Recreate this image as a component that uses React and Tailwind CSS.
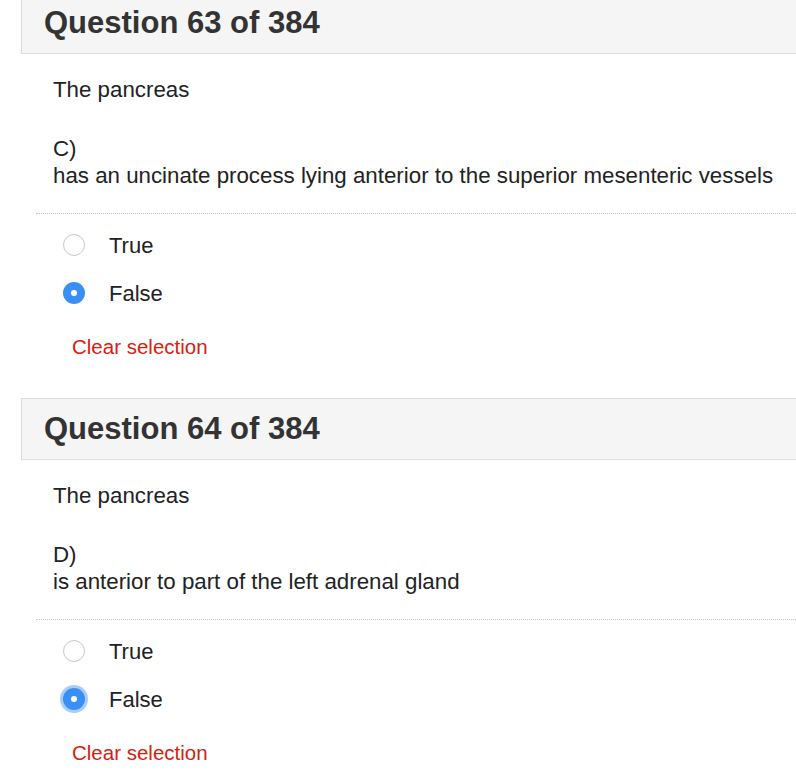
import React, { useState } from 'react';

const questions = [
  {
    number: 63,
    stem: 'The pancreas',
    letter: 'C)',
    text: 'has an uncinate process lying anterior to the superior mesenteric vessels',
    answer: 'False',
    focused: false,
  },
  {
    number: 64,
    stem: 'The pancreas',
    letter: 'D)',
    text: 'is anterior to part of the left adrenal gland',
    answer: 'False',
    focused: true,
  },
];

const Radio = ({ checked, focused }) => {
  if (checked) {
    return (
      <span
        className={`flex h-[22px] w-[22px] items-center justify-center rounded-full bg-[#3a8ff5] ${
          focused ? 'ring-[3px] ring-[#a9cdf8]' : ''
        }`}
      >
        <span className="h-[6px] w-[6px] rounded-full bg-white" />
      </span>
    );
  }
  return <span className="block h-[22px] w-[22px] rounded-full border border-[#c8c8c8] bg-white" />;
};

const Question = ({ q, first }) => {
  const [value, setValue] = useState(q.answer);

  return (
    <div className={first ? '-mt-[8px]' : 'mt-[39px]'}>
      {/* Header */}
      <div className="ml-[21px] -mr-[10px] flex h-[62px] items-center border border-[#dcdcdc] bg-[#f5f5f5] pl-[22px]">
        <h2 className="text-[31px] font-bold text-[#333333]">Question {q.number} of 384</h2>
      </div>

      {/* Body */}
      <div className="pl-[53px] pt-[22px] text-[22.3px] leading-[27px] text-[#222222]">
        <p>{q.stem}</p>
        <p className="mt-[32px]">{q.letter}</p>
        <p>{q.text}</p>
      </div>

      <div className="ml-[36px] mt-[24px] border-t border-dotted border-[#c4c4c4]" />

      <div className="mt-[7px] pl-[63px]">
        {['True', 'False'].map((opt) => (
          <label
            key={opt}
            className="flex h-[48px] cursor-pointer items-center"
            onClick={() => setValue(opt)}
          >
            <Radio checked={value === opt} focused={q.focused} />
            <span className="ml-[24px] text-[22px] text-[#222222]">{opt}</span>
          </label>
        ))}
      </div>

      <button
        className="ml-[72px] mt-[18px] block text-[20.5px] leading-[24px] text-[#d4210f]"
        onClick={() => setValue(null)}
      >
        Clear selection
      </button>
    </div>
  );
};

export default function App() {
  return (
    <div
      className="h-[778px] w-[796px] overflow-hidden bg-white"
      style={{ fontFamily: '"Liberation Sans", Arial, sans-serif' }}
    >
      {questions.map((q, i) => (
        <Question key={q.number} q={q} first={i === 0} />
      ))}
    </div>
  );
}
